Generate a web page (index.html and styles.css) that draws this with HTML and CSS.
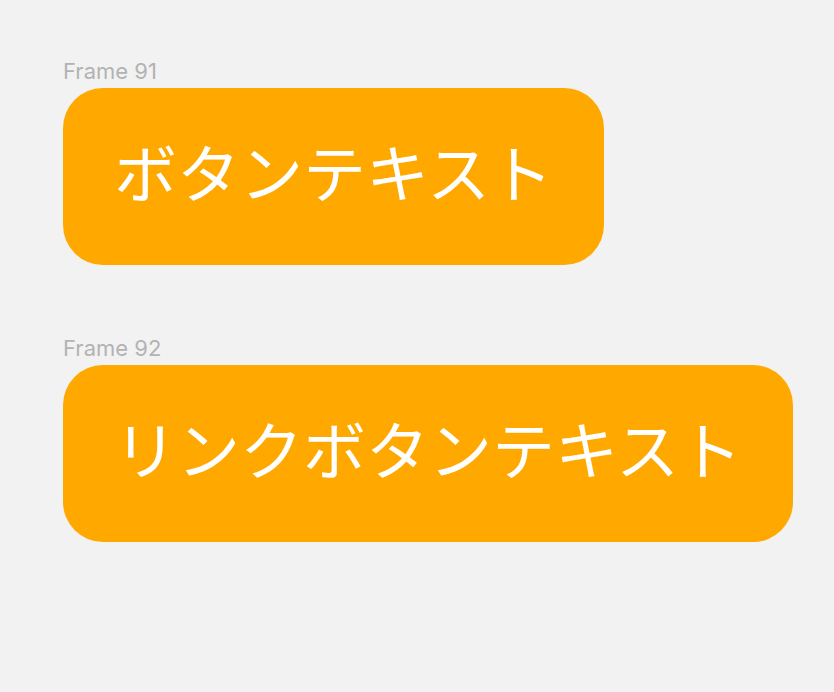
FILE: index.html
```html
<!DOCTYPE html>
<html lang="ja">
<head>
<meta charset="utf-8">
<title>Buttons</title>
<link rel="stylesheet" href="styles.css">
</head>
<body>
<div class="canvas">
  <div class="frame frame-91">
    <div class="frame-label">Frame 91</div>
    <div class="btn">ボタンテキスト</div>
  </div>
  <div class="frame frame-92">
    <div class="frame-label">Frame 92</div>
    <div class="btn">リンクボタンテキスト</div>
  </div>
</div>
</body>
</html>
```
FILE: styles.css
```css
html, body {
  margin: 0;
  padding: 0;
  background: #f2f2f2;
}
.canvas {
  display: flex;
  flex-direction: column;
  align-items: flex-start;
  padding: 58px 0 0 63px;
}
.frame {
  display: flex;
  flex-direction: column;
  align-items: flex-start;
}
.frame-91 {
  margin-bottom: 70px;
}
.frame-label {
  font-family: Inter, "Liberation Sans", sans-serif;
  font-size: 22px;
  line-height: 26px;
  color: #b3b3b3;
  margin-bottom: 4px;
}
.btn {
  box-sizing: border-box;
  height: 177px;
  padding: 0 51px 14px;
  display: flex;
  align-items: center;
  justify-content: center;
  background: #ffa800;
  border-radius: 40px;
  color: #ffffff;
  font-family: "Noto Sans CJK JP", "Noto Sans", sans-serif;
  font-size: 63px;
  line-height: 1;
  white-space: nowrap;
}
```
